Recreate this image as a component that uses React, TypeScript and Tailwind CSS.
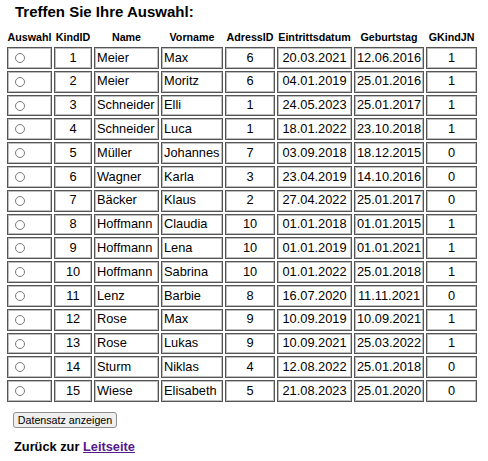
import React from "react";

const rows: [number, string, string, number, string, string, number][] = [
  [1, "Meier", "Max", 6, "20.03.2021", "12.06.2016", 1],
  [2, "Meier", "Moritz", 6, "04.01.2019", "25.01.2016", 1],
  [3, "Schneider", "Elli", 1, "24.05.2023", "25.01.2017", 1],
  [4, "Schneider", "Luca", 1, "18.01.2022", "23.10.2018", 1],
  [5, "Müller", "Johannes", 7, "03.09.2018", "18.12.2015", 0],
  [6, "Wagner", "Karla", 3, "23.04.2019", "14.10.2016", 0],
  [7, "Bäcker", "Klaus", 2, "27.04.2022", "25.01.2017", 0],
  [8, "Hoffmann", "Claudia", 10, "01.01.2018", "01.01.2015", 1],
  [9, "Hoffmann", "Lena", 10, "01.01.2019", "01.01.2021", 1],
  [10, "Hoffmann", "Sabrina", 10, "01.01.2022", "25.01.2018", 1],
  [11, "Lenz", "Barbie", 8, "16.07.2020", "11.11.2021", 0],
  [12, "Rose", "Max", 9, "10.09.2019", "10.09.2021", 1],
  [13, "Rose", "Lukas", 9, "10.09.2021", "25.03.2022", 1],
  [14, "Sturm", "Niklas", 4, "12.08.2022", "25.01.2018", 0],
  [15, "Wiese", "Elisabeth", 5, "21.08.2023", "25.01.2020", 0],
];

const cell =
  "h-[21.8px] border border-[#555] shadow-[inset_0_0_0_1px_#bdbdbd] px-[2px] py-0 text-[12.8px] leading-none";

export default function App() {
  return (
    <div className="w-[488px] min-h-[461px] bg-white text-black font-['Liberation_Sans',Arial,sans-serif]">
      <h3 className="pt-[3px] pl-[15px] text-[15px] font-bold leading-[17px]">Treffen Sie Ihre Auswahl:</h3>

      <table className="mt-[7px] ml-[5px] table-fixed border-separate border-spacing-[2px]">
        <thead>
          <tr className="text-[10.7px] font-bold">
            <th className="w-[45px] h-[14px] p-0 text-center">Auswahl</th>
            <th className="w-[38px] p-0 text-center">KindID</th>
            <th className="w-[65px] p-0 text-center">Name</th>
            <th className="w-[62px] p-0 text-center">Vorname</th>
            <th className="w-[50px] p-0 text-center">AdressID</th>
            <th className="w-[75px] p-0 text-center">Eintrittsdatum</th>
            <th className="w-[70px] p-0 text-center">Geburtstag</th>
            <th className="w-[51px] p-0 text-center">GKindJN</th>
          </tr>
        </thead>
        <tbody>
          {rows.map((r) => (
            <tr key={r[0]}>
              <td className={cell}>
                <div className="flex items-center pl-[5px]">
                  <span className="inline-block w-[10px] h-[10px] rounded-full border border-[#7a7a7a] bg-white" />
                </div>
              </td>
              <td className={`${cell} text-center`}>{r[0]}</td>
              <td className={`${cell} text-left`}>{r[1]}</td>
              <td className={`${cell} text-left`}>{r[2]}</td>
              <td className={`${cell} text-center`}>{r[3]}</td>
              <td className={`${cell} text-center`}>{r[4]}</td>
              <td className={`${cell} text-center`}>{r[5]}</td>
              <td className={`${cell} text-center`}>{r[6]}</td>
            </tr>
          ))}
        </tbody>
      </table>

      <button className="mt-[8px] ml-[13px] h-[16px] w-[104px] rounded-[3px] border border-[#8f8f8f] bg-[#efefef] text-[10.7px] leading-none text-black">
        Datensatz anzeigen
      </button>

      <p className="mt-[8px] ml-[14px] text-[12.8px] font-bold leading-[15px]">
        Zurück zur <a href="#" className="text-[#551a8b] underline">Leitseite</a>
      </p>
    </div>
  );
}
